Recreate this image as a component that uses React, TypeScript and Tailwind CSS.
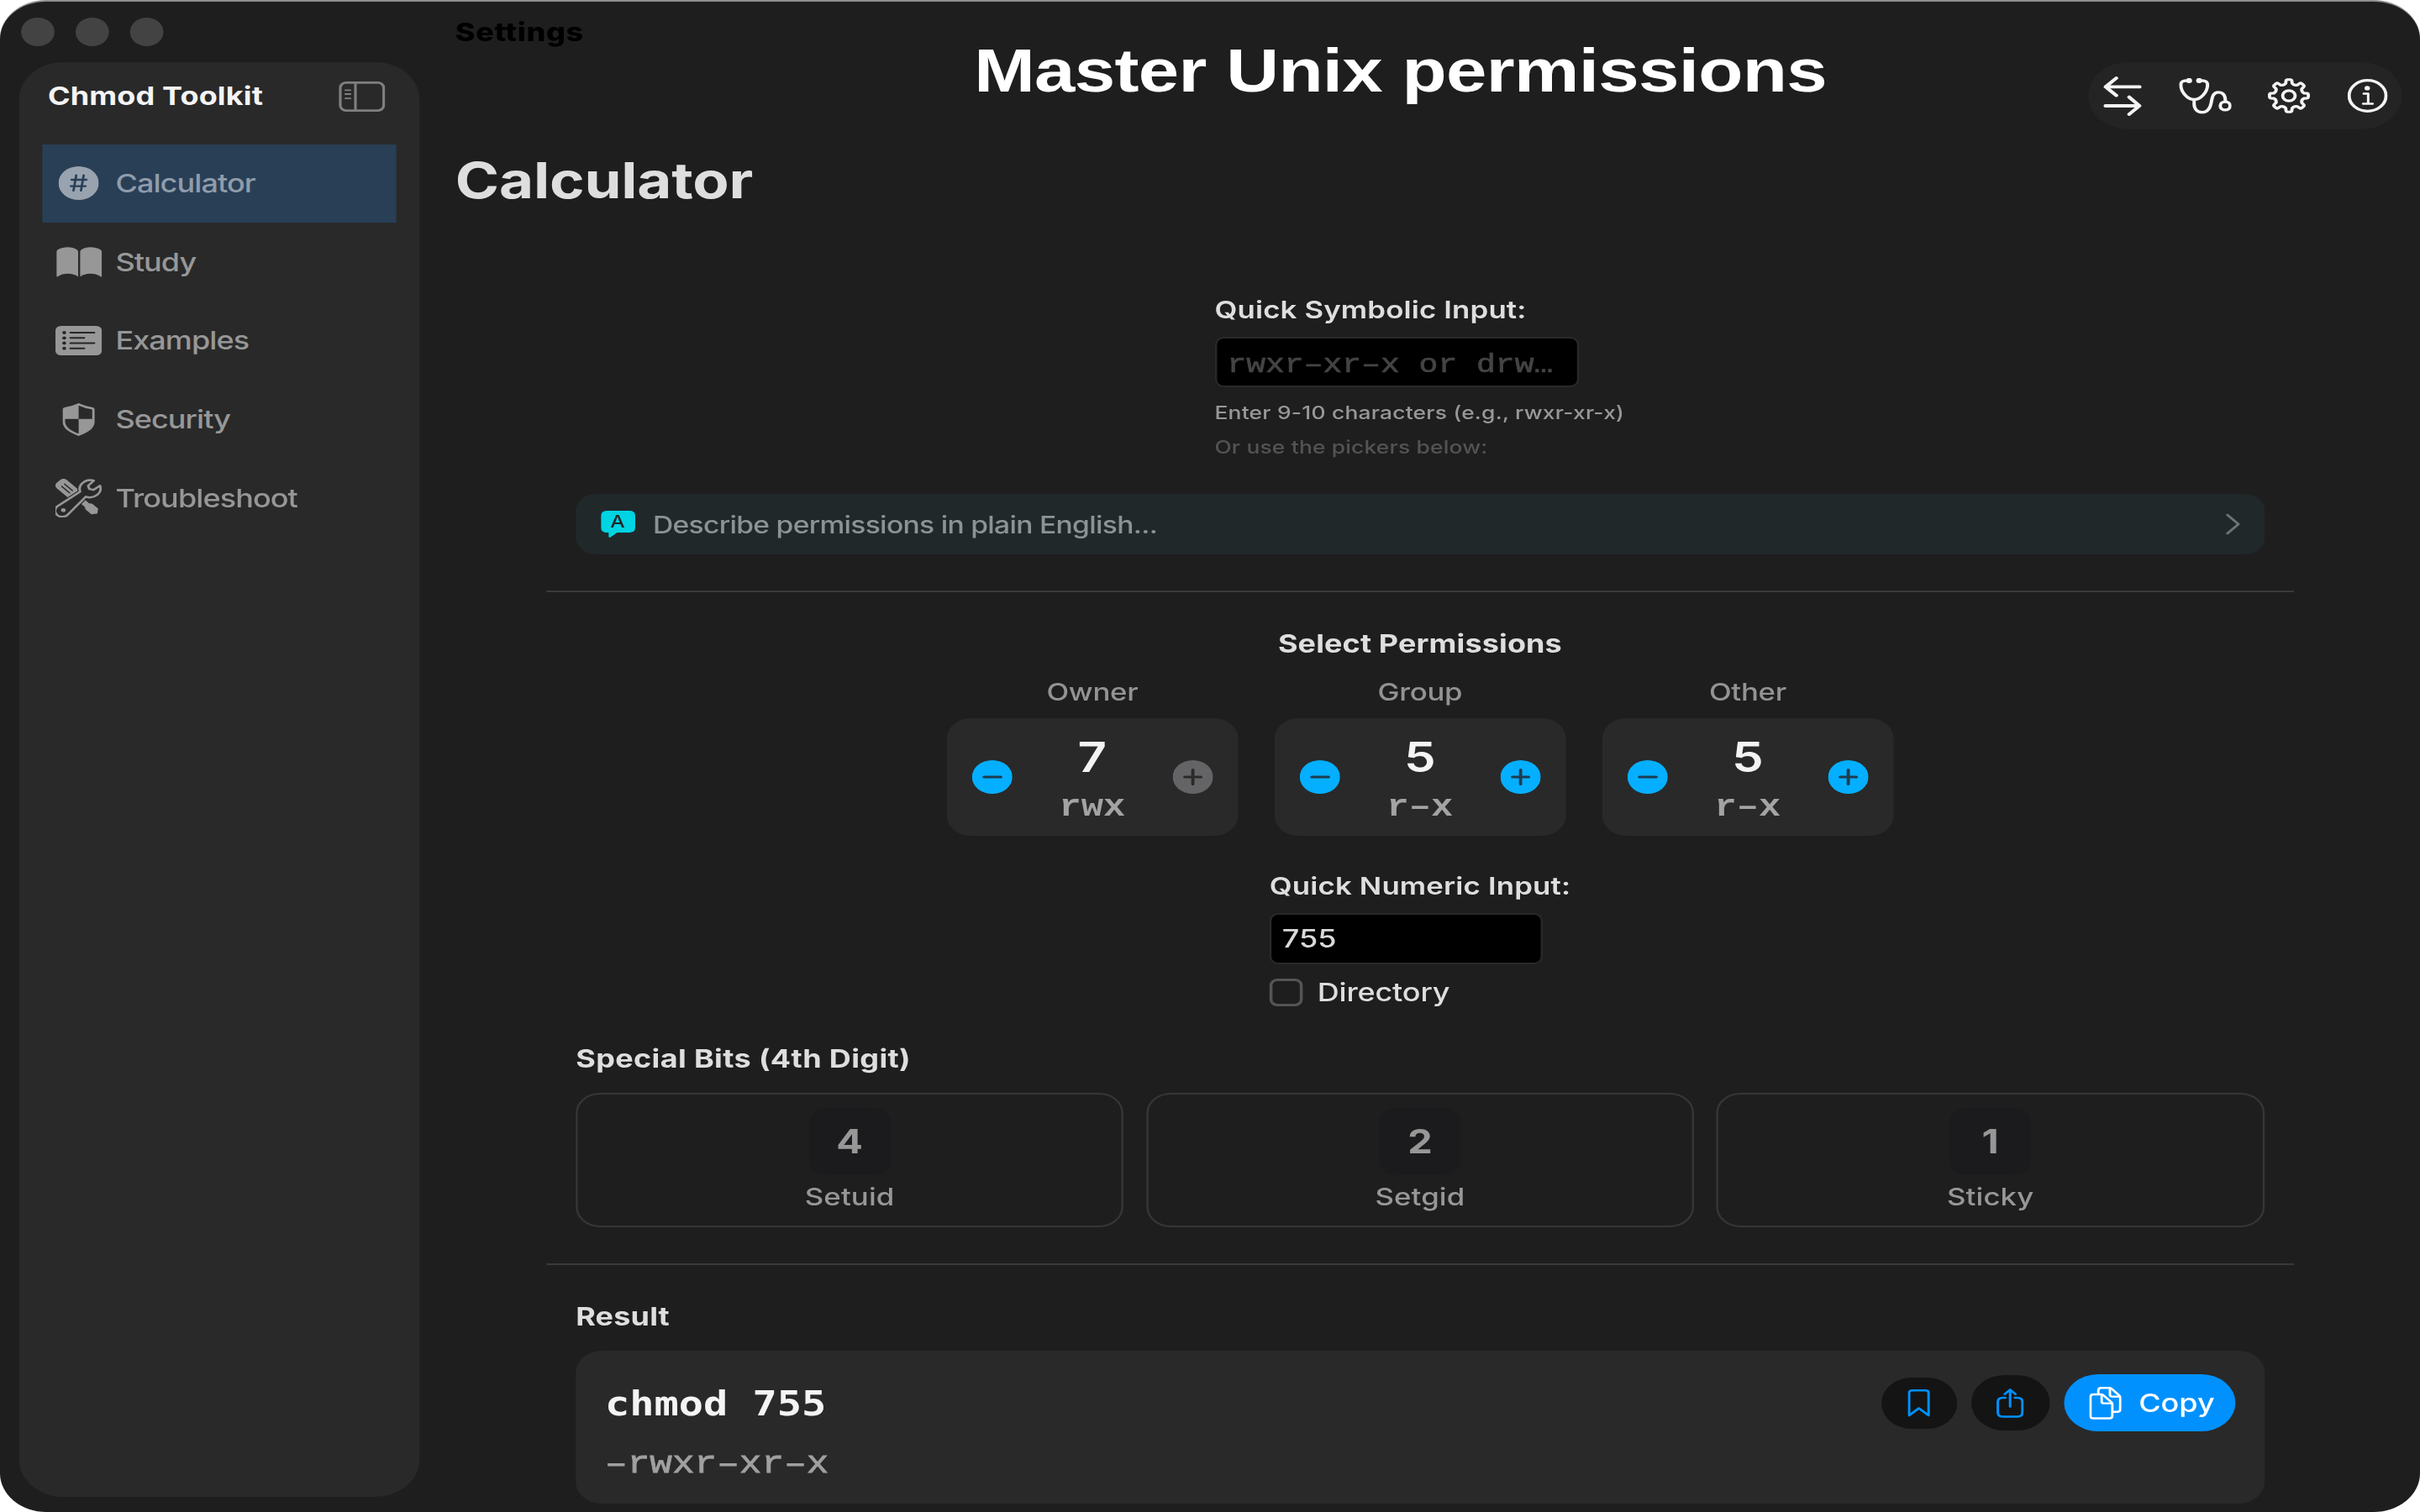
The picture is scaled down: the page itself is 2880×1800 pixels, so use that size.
import type { ReactNode } from 'react'
import clsx from 'clsx'

const sans = "font-['Inter',sans-serif]"
const mono = "font-['Liberation_Mono',monospace]"

/* ---------- icons ---------- */

function SidebarIcon() {
  return (
    <svg width="46" height="36" viewBox="0 0 46 36" fill="none" stroke="#7f7f7f">
      <rect x="1.4" y="1.4" width="43.2" height="33.2" rx="6" strokeWidth="2.8" />
      <path d="M16.5 2V34" strokeWidth="2.6" />
      <path d="M6.5 10.3H11.5M6.5 15H11.5M6.5 20.2H11.5" strokeWidth="1.8" strokeLinecap="round" />
    </svg>
  )
}

function HashIcon() {
  return (
    <svg width="40" height="40" viewBox="0 0 40 40">
      <circle cx="20" cy="20" r="20" fill="#98a3af" />
      <path
        d="M17.6 10.6L14.9 28.8M25 10.6L22.3 28.8M13 16H27.7M12.2 23.6H26.9"
        stroke="#293f56"
        strokeWidth="2.3"
        strokeLinecap="round"
      />
    </svg>
  )
}

function BookIcon() {
  return (
    <svg width="45" height="36" viewBox="0 0 45 36" fill="#979797">
      <path d="M0 6C0 4.5.6 3.8 2 2.8C7-.8 16-.8 20.3 3.2C21.1 4 21.5 4.6 21.5 6V35.4C16.5 30.6 6.5 30.6 1.3 35.2C.6 35.7 0 35.4 0 34.5Z" />
      <path d="M45 6C45 4.5 44.4 3.8 43 2.8C38-.8 29-.8 24.7 3.2C23.9 4 23.5 4.6 23.5 6V35.4C28.5 30.6 38.5 30.6 43.7 35.2C44.4 35.7 45 35.4 45 34.5Z" />
    </svg>
  )
}

function ListIcon() {
  return (
    <svg width="46" height="35" viewBox="0 0 46 35">
      <rect width="46" height="35" rx="5.5" fill="#979797" />
      <g stroke="#262626" strokeWidth="2" strokeLinecap="round">
        <path d="M14.8 8H38.5M14.8 14.3H28.5M14.8 20.4H38.5M14.8 26.7H28.5" />
      </g>
      <g fill="#262626">
        <circle cx="8.7" cy="8" r="1.9" />
        <circle cx="8.7" cy="14.3" r="1.9" />
        <circle cx="8.7" cy="20.4" r="1.9" />
        <circle cx="8.7" cy="26.7" r="1.9" />
      </g>
    </svg>
  )
}

function ShieldIcon() {
  return (
    <svg width="32" height="39" viewBox="0 0 32 39">
      <path
        d="M16 1.3C21 4 26 5.5 29 6C30.3 6.3 30.7 7 30.7 8V21.5C30.7 29 25 33.5 16 37.7C7 33.5 1.3 29 1.3 21.5V8C1.3 7 1.7 6.3 3 6C6 5.5 11 4 16 1.3Z"
        fill="none"
        stroke="#979797"
        strokeWidth="2.5"
      />
      <path d="M16 1.5V18.8H1.3V8C1.3 7 1.7 6.3 3 6C6 5.5 11 4 16 1.5Z" fill="#979797" />
      <path d="M16 18.8H30.7V21.5C30.7 29 25 33.5 16 37.7Z" fill="#979797" />
    </svg>
  )
}

const WRENCH =
  'M38 2.2A10.6 10.6 0 0 0 24.5 15.3L3.2 31.8A7.2 7.2 0 1 0 12.8 42L30.2 21.3A10.6 10.6 0 0 0 44.2 8.2L37.6 13.2L33.6 12.2L32.4 8.2Z'

function ToolsIcon() {
  return (
    <svg width="46" height="46" viewBox="0 0 46 46">
      <g transform="translate(11.5 11.5) rotate(45)">
        <rect x="-12" y="-7" width="25" height="14" rx="4.5" fill="#979797" />
        <path d="M-5.5 -2H5.5M-5.5 2H5.5" stroke="#292929" strokeWidth="1.3" strokeLinecap="round" />
        <path
          d="M12 -2.3H28L31 -4H38.5L41.5 0L38.5 4H31L28 2.3H12Z"
          fill="#979797"
          stroke="#979797"
          strokeWidth="1.5"
          strokeLinejoin="round"
        />
      </g>
      <path d={WRENCH} fill="#292929" stroke="#292929" strokeWidth="4.5" />
      <path d={WRENCH} fill="#292929" stroke="#979797" strokeWidth="2.4" strokeLinejoin="round" />
      <circle cx="7.8" cy="37.2" r="2.3" fill="#979797" />
    </svg>
  )
}

function SwapIcon() {
  return (
    <svg
      width="38"
      height="47"
      viewBox="0 0 38 47"
      fill="none"
      stroke="#f4f4f4"
      strokeWidth="3.8"
      strokeLinecap="round"
      strokeLinejoin="round"
    >
      <path d="M36 12.4H2.4M12.8 2L2.2 12.4L12.8 22.6" />
      <path d="M2 35H35.6M25.6 24.6L35.8 35L25.6 45" />
    </svg>
  )
}

function StethoscopeIcon() {
  return (
    <svg
      width="52"
      height="43"
      viewBox="0 0 52 43"
      fill="none"
      stroke="#f4f4f4"
      strokeWidth="3.3"
      strokeLinecap="round"
    >
      <path d="M9.5 2.9C4 2.9 1.8 4 1.8 8C1.8 16 8 25.5 15 25.5C22 25.5 28.3 16 28.3 8C28.3 4 26 2.9 20.5 2.9" />
      <path d="M15 26V31C15 36.5 18 40.7 23 40.7C29 40.7 31 35.5 32 29C33 22 34 16.8 39 16.8C44 16.8 46 21 46 27" />
      <circle cx="45.8" cy="33" r="4.9" />
      <circle cx="10" cy="2.9" r="1.4" fill="#f4f4f4" />
      <circle cx="20" cy="2.9" r="1.4" fill="#f4f4f4" />
    </svg>
  )
}

function gearPath(teeth: number, outer: number, inner: number) {
  const at = (deg: number, r: number) => {
    const a = ((deg - 90) * Math.PI) / 180
    return `${(21 + r * Math.cos(a)).toFixed(2)} ${(21 + r * Math.sin(a)).toFixed(2)}`
  }
  const step = 360 / teeth
  let d = ''
  for (let i = 0; i < teeth; i++) {
    const mid = i * step
    d += `${i === 0 ? 'M' : 'L'}${at(mid - 12, inner)}L${at(mid - 9, outer - 1)}Q${at(mid - 8, outer)} ${at(mid - 5, outer)}`
    d += `L${at(mid + 5, outer)}Q${at(mid + 8, outer)} ${at(mid + 9, outer - 1)}L${at(mid + 12, inner)}`
    d += `Q${at(mid + step / 2, inner - 2.2)} ${at(mid + step - 12, inner)}`
  }
  return d + 'Z'
}

function GearIcon() {
  return (
    <svg
      width="42"
      height="42"
      viewBox="0 0 42 42"
      fill="none"
      stroke="#f4f4f4"
      strokeWidth="3.2"
      strokeLinejoin="round"
    >
      <path d={gearPath(8, 19.3, 15.2)} />
      <circle cx="21" cy="21" r="6.2" />
    </svg>
  )
}

function InfoIcon() {
  return (
    <svg width="40" height="40" viewBox="0 0 40 40" fill="none" stroke="#f4f4f4" strokeLinecap="round">
      <circle cx="20" cy="20" r="18.3" strokeWidth="3.2" />
      <circle cx="19.7" cy="10.9" r="2.7" fill="#f4f4f4" stroke="none" />
      <path d="M16.2 17.6H20.6V29.4M15.6 29.6H25" strokeWidth="2.5" strokeLinejoin="round" />
    </svg>
  )
}

function BubbleIcon() {
  return (
    <svg width="34" height="32" viewBox="0 0 34 32">
      <path
        d="M6 0H28Q34 0 34 6V20Q34 26 28 26H16L9.6 31.6Q7.8 32.6 7.6 30.6V26H6Q0 26 0 20V6Q0 0 6 0Z"
        fill="#00d3e2"
      />
      <text
        x="16.5"
        y="20.5"
        textAnchor="middle"
        fill="#20282a"
        className="font-['Inter',sans-serif] text-[20.5px] font-medium"
      >
        A
      </text>
    </svg>
  )
}

function BookmarkIcon() {
  return (
    <svg width="22" height="33" viewBox="0 0 22 33" fill="none" stroke="#0091ff" strokeWidth="2.6">
      <path
        d="M4.3 1.3H17.7Q20.7 1.3 20.7 4.3V31L11 22.6L1.3 31V4.3Q1.3 1.3 4.3 1.3Z"
        strokeLinejoin="round"
      />
    </svg>
  )
}

function ShareIcon() {
  return (
    <svg
      width="27"
      height="35"
      viewBox="0 0 27 35"
      fill="none"
      stroke="#0091ff"
      strokeWidth="2.5"
      strokeLinecap="round"
      strokeLinejoin="round"
    >
      <path d="M8.8 11H6.3Q1.3 11 1.3 16V28.5Q1.3 33.5 6.3 33.5H20.7Q25.7 33.5 25.7 28.5V16Q25.7 11 20.7 11H18.2" />
      <path d="M13.5 21.5V1.6M8.2 6.6L13.5 1.4L18.8 6.6" />
    </svg>
  )
}

function CopyIcon() {
  return (
    <svg
      width="32"
      height="39"
      viewBox="0 0 32 39"
      fill="none"
      stroke="#ffffff"
      strokeWidth="2.4"
      strokeLinejoin="round"
    >
      <path d="M9 8.5V4.3Q9 1.2 12 1.2H19.5Q21 1.2 22 2.2L29.6 10.2Q30.7 11.3 30.7 12.8V26.8Q30.7 29.8 27.7 29.8H23.5" />
      <path d="M20.5 1.6V9.6Q20.5 11.6 22.5 11.6H30.2" />
      <path d="M4.2 9H11.5Q13 9 14 10L21.8 18.2Q22.9 19.3 22.9 20.8V34.5Q22.9 37.5 19.9 37.5H4.2Q1.2 37.5 1.2 34.5V12Q1.2 9 4.2 9Z" />
      <path d="M12.3 9.4V17.6Q12.3 19.6 14.3 19.6H22.3" />
    </svg>
  )
}

/* ---------- shared pieces ---------- */

function Heading({ children, className }: { children: ReactNode; className?: string }) {
  return (
    <p className={clsx('h-[30px] text-[30px] leading-[30px] font-bold whitespace-nowrap text-[#dedede]', className)}>
      {children}
    </p>
  )
}

function FieldLabel({ children }: { children: ReactNode }) {
  return (
    <p className="h-[30px] text-[29px] leading-[30px] font-semibold tracking-[0.12px] whitespace-nowrap text-[#dedede]">
      {children}
    </p>
  )
}

function StepButton({ kind, disabled }: { kind: 'minus' | 'plus'; disabled?: boolean }) {
  return (
    <button type="button" className="size-10">
      <svg width="40" height="40" viewBox="0 0 40 40">
        <circle cx="20" cy="20" r="20" fill={disabled ? '#646466' : '#05afff'} />
        <path
          d={kind === 'minus' ? 'M12 20H28.5' : 'M12 20H28M20 11.5V28.5'}
          stroke={disabled ? '#2a2a2a' : '#1d3c50'}
          strokeWidth="3.2"
          strokeLinecap="round"
        />
      </svg>
    </button>
  )
}

const NAV = [
  { label: 'Calculator', icon: <HashIcon />, active: true },
  { label: 'Study', icon: <BookIcon />, active: false },
  { label: 'Examples', icon: <ListIcon />, active: false },
  { label: 'Security', icon: <ShieldIcon />, active: false },
  { label: 'Troubleshoot', icon: <ToolsIcon />, active: false },
]

const DIGITS = [
  { who: 'Owner', digit: 7, bits: 'rwx', maxed: true },
  { who: 'Group', digit: 5, bits: 'r–x', maxed: false },
  { who: 'Other', digit: 5, bits: 'r–x', maxed: false },
]

const SPECIAL = [
  { value: 4, name: 'Setuid' },
  { value: 2, name: 'Setgid' },
  { value: 1, name: 'Sticky' },
]

/* ---------- sections ---------- */

function Sidebar() {
  return (
    <div className="w-[416px] shrink-0 pl-[19px]">
      <div className="flex h-[74px] gap-[20.7px] pt-[21px] pl-[1.6px]">
        <span className="size-[33.5px] rounded-full bg-[#434343]" />
        <span className="size-[33.5px] rounded-full bg-[#434343]" />
        <span className="size-[33.5px] rounded-full bg-[#434343]" />
      </div>
      <aside className="h-[1708px] w-[396.5px] rounded-[44px] bg-[#292929]">
        <div className="mb-[15.5px] flex h-[82px] items-center justify-between pr-[33.5px] pl-[28.5px]">
          <span className="-mt-[3px] text-[30px] leading-[30px] font-bold tracking-[0.12px] text-[#f4f4f4]">
            Chmod Toolkit
          </span>
          <SidebarIcon />
        </div>
        <nav className="mx-[23px]">
          {NAV.map((item) => (
            <a
              key={item.label}
              className={clsx(
                'flex h-[93.7px] items-center pl-[13.2px] text-[30px] font-medium tracking-[-0.75px]',
                item.active ? 'bg-[#293f56] text-[#8f9cab]' : 'text-[#979797]',
              )}
            >
              <span className="mr-[13.3px] flex w-[46px] justify-center">{item.icon}</span>
              {item.label}
            </a>
          ))}
        </nav>
      </aside>
    </div>
  )
}

function TopBar() {
  return (
    <header className="flex h-[336px] items-start">
      <div className="w-[550px] shrink-0 pl-[35.5px]">
        <p className="mt-[23px] h-[30px] text-[30px] leading-[30px] font-extrabold tracking-[0.5px] text-black">
          Settings
        </p>
        <h1 className="mt-[131.5px] h-[60px] text-[59px] leading-[60px] font-bold tracking-[-0.15px] text-[#dedede]">
          Calculator
        </h1>
      </div>
      <h2 className="mt-[41.5px] font-['Liberation_Sans',Arial,sans-serif] text-[72.5px] leading-[84px] font-bold tracking-[-0.55px] whitespace-nowrap text-white">
        Master Unix permissions
      </h2>
      <div className="mt-[74px] mr-[18px] ml-auto flex h-[80px] w-[311px] items-center gap-[36.5px] rounded-full bg-[#242424] pl-[15px]">
        <SwapIcon />
        <StethoscopeIcon />
        <GearIcon />
        <InfoIcon />
      </div>
    </header>
  )
}

function SymbolicInput() {
  return (
    <div className="mx-auto mt-[18px] w-[407.5px]">
      <FieldLabel>Quick Symbolic Input:</FieldLabel>
      <div
        className={clsx(
          'mt-[17px] flex h-[60px] w-[361px] items-center rounded-[9px] border-2 border-[#292929] bg-black pt-[9px] pl-[10.5px] text-[31.7px] text-[#444444] [-webkit-text-stroke:0.7px]',
          mono,
        )}
      >
        rwxr–xr–x or drw…
      </div>
      <p className="mt-[17.5px] h-[24px] text-[22px] leading-[24px] font-medium tracking-[0.18px] whitespace-nowrap text-[#989898]">
        Enter 9-10 characters (e.g., rwxr-xr-x)
      </p>
      <p className="mt-[17.5px] h-[24px] text-[22px] leading-[24px] font-medium tracking-[0.14px] whitespace-nowrap text-[#535353]">
        Or use the pickers below:
      </p>
    </div>
  )
}

function PermissionPickers() {
  return (
    <div className="mt-[27.5px] flex justify-center gap-[36px]">
      {DIGITS.map((d) => (
        <div key={d.who} className="w-[289px]">
          <p className="h-[30px] text-center text-[29px] leading-[30px] font-medium tracking-[-0.25px] text-[#939393]">
            {d.who}
          </p>
          <div className="mt-[16.5px] flex h-[140px] items-center justify-between rounded-[24px] bg-[#292929] px-[25px]">
            <StepButton kind="minus" />
            <div className="h-full pt-[20.5px] text-center">
              <p className="h-[50px] text-[50px] leading-[50px] font-semibold text-[#f4f4f4]">{d.digit}</p>
              <p className={clsx('mt-[16.5px] h-[40px] text-[36.5px] leading-[40px] font-bold text-[#a3a3a3]', mono)}>
                {d.bits}
              </p>
            </div>
            <StepButton kind="plus" disabled={d.maxed} />
          </div>
        </div>
      ))}
    </div>
  )
}

function NumericInput() {
  return (
    <div className="mx-auto mt-[45px] w-[298.5px]">
      <FieldLabel>Quick Numeric Input:</FieldLabel>
      <div className="mt-[16.5px] flex h-[61px] w-[270.5px] items-center rounded-[9px] border-2 border-[#292929] bg-black pl-[10.5px] text-[30px] font-medium text-[#d9d9d9]">
        755
      </div>
      <label className="mt-[17px] flex h-[33px] items-center gap-[14.5px] text-[30px] font-medium tracking-[-0.15px] text-[#dedede]">
        <span className="size-[33px] rounded-[8px] border-3 border-[#545454]" />
        Directory
      </label>
    </div>
  )
}

function SpecialBits() {
  return (
    <div className="px-[29px]">
      <Heading className="mt-[47px] tracking-[0.3px]">Special Bits (4th Digit)</Heading>
      <div className="mt-[26px] grid grid-cols-3 gap-[22.5px]">
        {SPECIAL.map((s) => (
          <div
            key={s.name}
            className="flex h-[160px] flex-col items-center rounded-[24px] border-2 border-[#363636] pt-[16px] text-[#979797]"
          >
            <span className="flex size-[80px] items-center justify-center rounded-[16px] bg-[#1b1b1d] text-[39px] leading-none font-bold">
              {s.value}
            </span>
            <span className="mt-[11.5px] h-[30px] text-[29px] leading-[30px] font-medium tracking-[0.1px]">
              {s.name}
            </span>
          </div>
        ))}
      </div>
    </div>
  )
}

function ResultCard() {
  return (
    <div className="px-[29px]">
      <Heading className="mt-[46px] tracking-[0.15px]">Result</Heading>
      <div className="mt-[26px] flex h-[182px] items-start justify-between rounded-[26px] bg-[#292929] pr-[28.5px] pl-[29px]">
        <div>
          <p className="mt-[40.5px] h-[44px] font-['DejaVu_Sans_Mono',monospace] text-[40.5px] leading-[44px] font-bold whitespace-pre text-[#f4f4f4]">
            chmod 755
          </p>
          <p
            className={clsx(
              'mt-[30px] h-[40px] text-[37px] leading-[40px] text-[#a0a0a0] [-webkit-text-stroke:0.8px]',
              mono,
            )}
          >
            –rwxr–xr–x
          </p>
        </div>
        <div className="mt-[28px] flex h-[68px] items-center gap-[14.5px]">
          <button type="button" className="flex h-[61px] w-[75px] items-center justify-center rounded-[30px] bg-[#141414]">
            <BookmarkIcon />
          </button>
          <button type="button" className="flex h-[66px] w-[77.5px] items-center justify-center rounded-[33px] bg-[#141414]">
            <ShareIcon />
          </button>
          <button
            type="button"
            className="flex h-[68px] w-[170px] items-center rounded-full bg-[#0091ff] pl-[25px] text-[30px] font-medium text-white"
          >
            <CopyIcon />
            <span className="ml-[17px]">Copy</span>
          </button>
        </div>
      </div>
    </div>
  )
}

export default function App() {
  return (
    <div className="h-[1800px] w-[2880px] overflow-hidden bg-white">
      {/* the window is laid out 2400 wide and stretched to fill the 16:10 canvas */}
      <div
        className={clsx(
          'flex h-[1800px] w-[2400px] origin-top-left scale-x-120 overflow-hidden rounded-[46px] border-t-2 border-[#8e8e8e] bg-[#1e1e1e]',
          sans,
        )}
      >
        <div className="-mt-[2px] flex w-full">
          <Sidebar />
          <main className="w-[1984px] shrink-0">
            <TopBar />
            <div className="ml-[126px] w-[1732.5px]">
              <SymbolicInput />
              <div className="mx-[29px] mt-[44px] flex h-[72px] items-center rounded-[20px] bg-[#20282a] pr-[24px] pl-[24.5px]">
                <BubbleIcon />
                <span className="mt-[1px] ml-[18px] text-[28px] font-medium tracking-[-0.58px] text-[#8d9394]">
                  Describe permissions in plain English...
                </span>
                <svg className="ml-auto" width="15" height="26" viewBox="0 0 15 26" fill="none">
                  <path
                    d="M2 2L13 13L2 24"
                    stroke="#6e7475"
                    strokeWidth="2.5"
                    strokeLinecap="round"
                    strokeLinejoin="round"
                  />
                </svg>
              </div>
              <div className="mt-[43px] h-[2px] bg-[#3a3a3a]" />
              <Heading className="mt-[46px] text-center tracking-[0.1px]">Select Permissions</Heading>
              <PermissionPickers />
              <NumericInput />
              <SpecialBits />
              <div className="mt-[43.5px] h-[2px] bg-[#3a3a3a]" />
              <ResultCard />
            </div>
          </main>
        </div>
      </div>
    </div>
  )
}
